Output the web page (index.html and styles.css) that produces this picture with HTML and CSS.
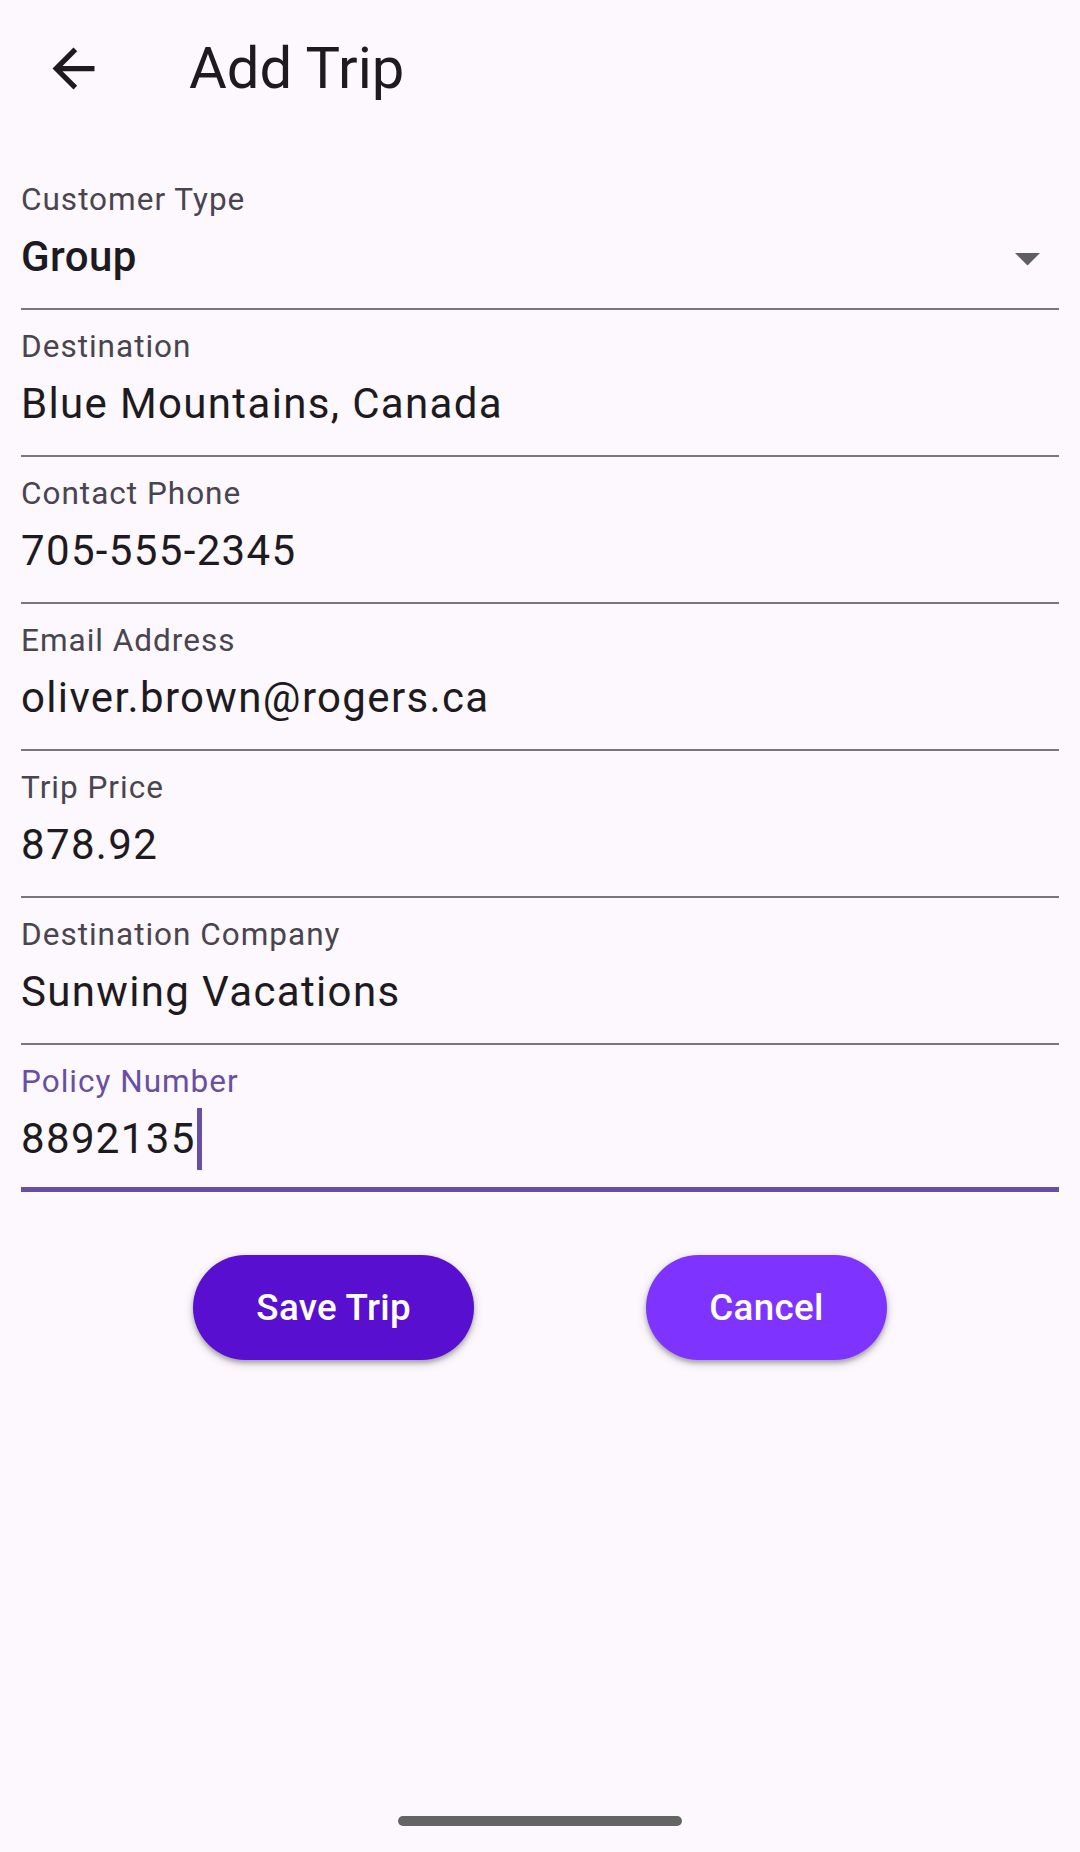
FILE: index.html
```html
<!DOCTYPE html>
<html lang="en">
<head>
<meta charset="utf-8">
<title>Add Trip</title>
<link rel="stylesheet" href="styles.css">
</head>
<body>
<div class="screen">
  <header class="appbar">
    <svg class="back" viewBox="0 0 24 24" width="63" height="63" aria-hidden="true">
      <path d="M20 11H7.83l5.59-5.59L12 4l-8 8 8 8 1.41-1.41L7.83 13H20v-2z" fill="#1d1b20"/>
    </svg>
    <h1 class="title">Add Trip</h1>
  </header>

  <form class="form">
    <div class="field">
      <div class="label">Customer Type</div>
      <div class="value-row">
        <span class="value value-select">Group</span>
        <svg class="dropdown" viewBox="7 10 10 5" width="25" height="12.5" aria-hidden="true">
          <path d="M7 10l5 5 5-5z" fill="#5f5f63"/>
        </svg>
      </div>
    </div>
    <div class="field">
      <div class="label">Destination</div>
      <div class="value">Blue Mountains, Canada</div>
    </div>
    <div class="field">
      <div class="label">Contact Phone</div>
      <div class="value">705-555-2345</div>
    </div>
    <div class="field">
      <div class="label">Email Address</div>
      <div class="value">oliver.brown@rogers.ca</div>
    </div>
    <div class="field">
      <div class="label">Trip Price</div>
      <div class="value">878.92</div>
    </div>
    <div class="field">
      <div class="label">Destination Company</div>
      <div class="value">Sunwing Vacations</div>
    </div>
    <div class="field field-focused">
      <div class="label">Policy Number</div>
      <div class="value">8892135<span class="cursor"></span></div>
    </div>
  </form>

  <div class="actions">
    <button type="button" class="btn btn-save">Save Trip</button>
    <button type="button" class="btn btn-cancel">Cancel</button>
  </div>

  <div class="home-bar"><span class="home-indicator"></span></div>
</div>
</body>
</html>
```

FILE: styles.css
```css
* {
  box-sizing: border-box;
}

html, body {
  margin: 0;
  padding: 0;
  background: #fdf7fe;
}

body {
  font-family: Roboto, "Noto Sans", "Liberation Sans", sans-serif;
  color: #1d1b20;
}

.screen {
  width: 1080px;
  min-height: 1852px;
  display: flex;
  flex-direction: column;
}

.appbar {
  height: 136px;
  display: flex;
  align-items: center;
  padding-left: 42px;
}

.back {
  display: block;
  flex: none;
}

.title {
  margin: 0 0 0 84px;
  font-size: 58px;
  font-weight: 400;
  line-height: 1;
  color: #1d1b20;
}

.form {
  padding: 27px 21px 0;
}

.field {
  height: 147px;
  border-bottom: 2px solid #79747e;
  padding-top: 17px;
}

.label {
  font-size: 31.5px;
  line-height: 40px;
  letter-spacing: 1px;
  color: #49454f;
}

.value {
  margin-top: 12px;
  font-size: 42px;
  line-height: 50px;
  letter-spacing: 1.35px;
  color: #1d1b20;
}

.value-row {
  display: flex;
  justify-content: space-between;
  align-items: center;
}

.value-select {
  font-weight: 500;
  letter-spacing: 0.4px;
}

.dropdown {
  display: block;
  margin: 17px 19px 0 0;
}

.field-focused {
  border-bottom: 5px solid #6750a4;
}

.field-focused .label {
  color: #6750a4;
}

.cursor {
  display: inline-block;
  width: 5px;
  height: 62px;
  margin: -6px 0 -12px 1px;
  vertical-align: top;
  background: #6750a4;
}

.actions {
  display: flex;
  justify-content: space-evenly;
  padding: 0 21px;
  margin-top: 63px;
}

.btn {
  height: 105px;
  border: none;
  border-radius: 53px;
  padding: 0 63px;
  font-family: Roboto, "Noto Sans", "Liberation Sans", sans-serif;
  font-size: 36.75px;
  font-weight: 500;
  letter-spacing: 0.3px;
  color: #ffffff;
  box-shadow: 0 3px 4px rgba(0, 0, 0, 0.25), 0 3px 8px 2px rgba(0, 0, 0, 0.12);
  cursor: pointer;
}

.btn-save {
  background: #580fcf;
}

.btn-cancel {
  background: #7f33ff;
}

.home-bar {
  margin-top: auto;
  padding-bottom: 26px;
  display: flex;
  justify-content: center;
}

.home-indicator {
  display: block;
  width: 284px;
  height: 10px;
  border-radius: 5px;
  background: #646464;
}
```
